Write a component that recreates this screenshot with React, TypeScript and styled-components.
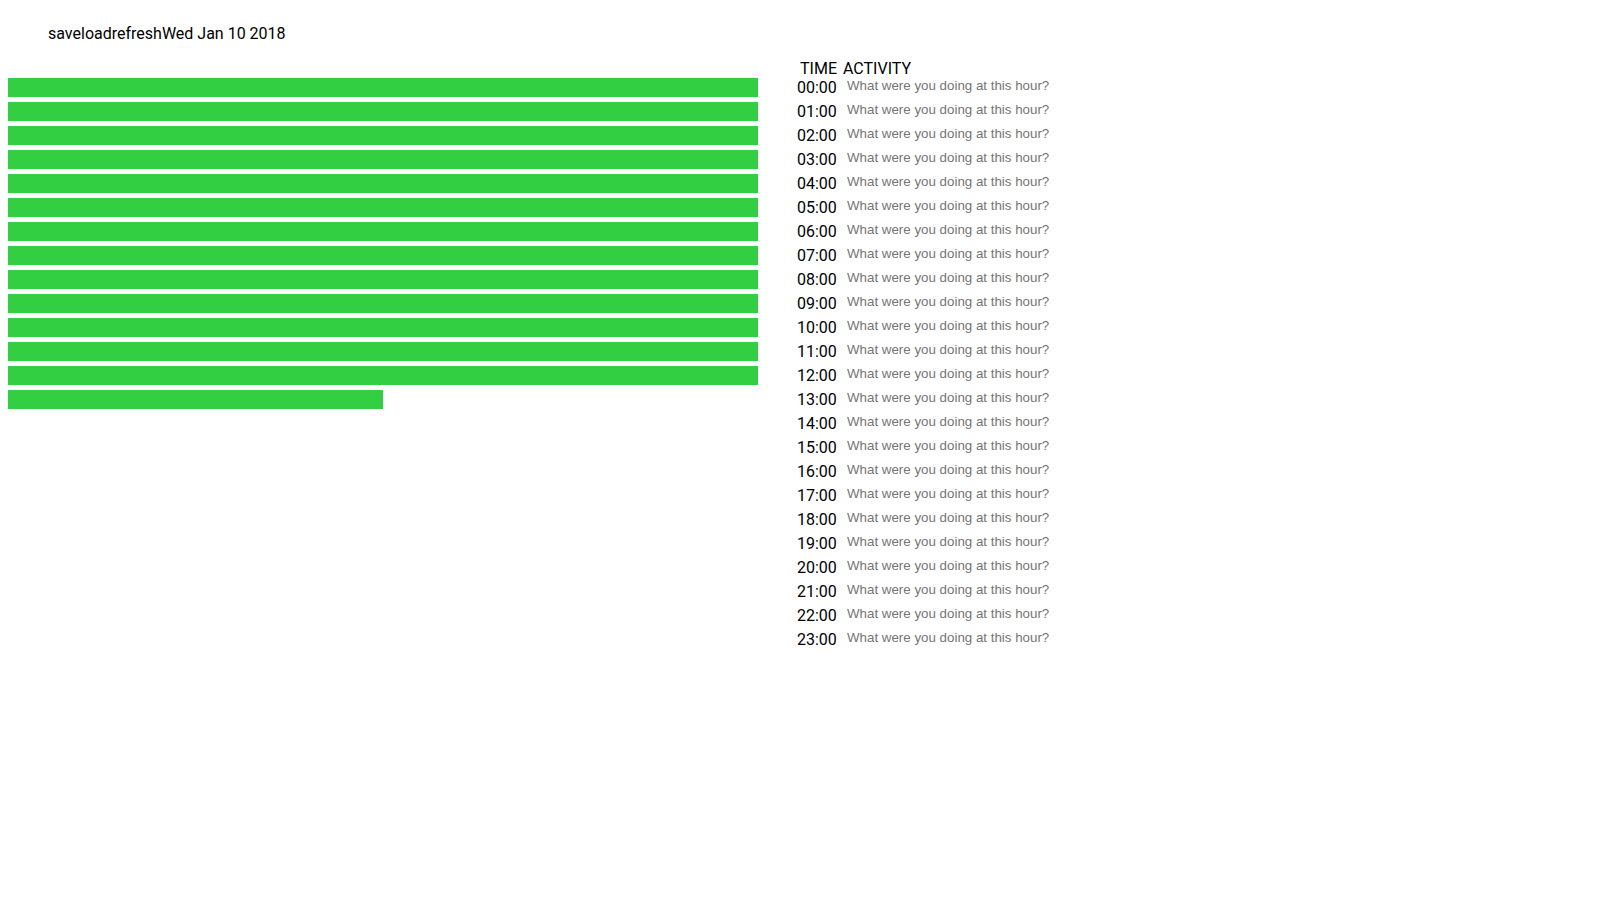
import React from "react";
import styled, { createGlobalStyle } from "styled-components";

const Global = createGlobalStyle`
  html, body { margin: 0; padding: 0; background: #ffffff; }
  body { font-family: Roboto, "Noto Sans", sans-serif; color: #000; }
  input::placeholder { color: #757575; opacity: 1; }
`;

const Page = styled.div`
  padding: 8px;
`;

const Toolbar = styled.div`
  display: flex;
  align-items: center;
  margin: 16px 0 0 0;
  padding-left: 40px;
  height: 19px;
  font-size: 16px;
  line-height: 19px;
`;

const ToolButton = styled.button`
  background: none;
  border: none;
  padding: 0;
  margin: 0;
  font: inherit;
  color: inherit;
  cursor: pointer;
`;

const DateLabel = styled.span``;

const Main = styled.div`
  display: flex;
  align-items: flex-start;
  gap: 39px;
  margin-top: 16px;
`;

const BarColumn = styled.div`
  display: flex;
  flex-direction: column;
  gap: 5px;
  width: 750px;
  padding-top: 19px;
`;

const Bar = styled.div`
  height: 19px;
  background: #32cf43;
`;

const Table = styled.div`
  display: grid;
  grid-template-columns: 40px 220px;
  column-gap: 6px;
  grid-auto-rows: 24px;
  grid-template-rows: 19px;
  font-size: 16px;
`;

const HeadTime = styled.div`
  line-height: 19px;
  text-align: right;
`;

const HeadActivity = styled.div`
  line-height: 19px;
`;

const TimeCell = styled.div`
  line-height: 19px;
  align-self: start;
  font-variant-numeric: tabular-nums;
`;

const ActivityInput = styled.input`
  align-self: start;
  height: 15px;
  padding: 0 0 0 4px;
  margin: 0;
  border: none;
  outline: none;
  background: transparent;
  font-family: "Liberation Sans", Arial, sans-serif;
  font-size: 13.333px;
  color: #000;
  width: 215px;
`;

const fractions = [1, 1, 1, 1, 1, 1, 1, 1, 1, 1, 1, 1, 1, 0.5];

export default function App() {
  const hours = Array.from({ length: 24 }, (_, i) => `${String(i).padStart(2, "0")}:00`);
  return (
    <Page>
      <Global />
      <Toolbar>
        <ToolButton>save</ToolButton>
        <ToolButton>load</ToolButton>
        <ToolButton>refresh</ToolButton>
        <DateLabel>Wed Jan 10 2018</DateLabel>
      </Toolbar>
      <Main>
        <BarColumn>
          {fractions.map((f, i) => (
            <Bar key={i} style={{ width: `${f * 100}%` }} />
          ))}
        </BarColumn>
        <Table>
          <HeadTime>TIME</HeadTime>
          <HeadActivity>ACTIVITY</HeadActivity>
          {hours.map((h) => (
            <React.Fragment key={h}>
              <TimeCell>{h}</TimeCell>
              <ActivityInput placeholder="What were you doing at this hour?" />
            </React.Fragment>
          ))}
        </Table>
      </Main>
    </Page>
  );
}
